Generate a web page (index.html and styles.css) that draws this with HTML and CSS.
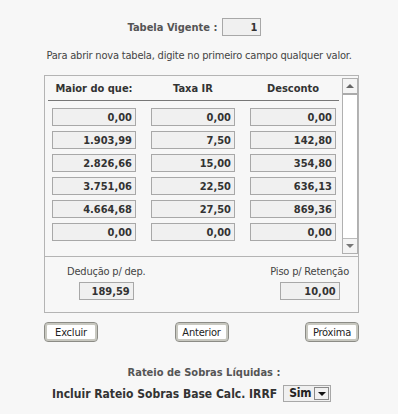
FILE: index.html
```html
<!DOCTYPE html>
<html lang="pt">
<head>
  <meta charset="utf-8">
  <title>Tabela IRRF</title>
  <link rel="stylesheet" href="styles.css">
</head>
<body>
  <div class="page">
    <div class="vigente">
      <span class="label-bold">Tabela Vigente :</span>
      <input class="field num small" type="text" value="1" readonly>
    </div>
    <p class="hint">Para abrir nova tabela, digite no primeiro campo qualquer valor.</p>

    <div class="box">
      <div class="scroll">
        <div class="table">
          <div class="row head">
            <span>Maior do que:</span>
            <span>Taxa IR</span>
            <span>Desconto</span>
          </div>
          <div class="row"><input class="field num" value="0,00" readonly><input class="field num" value="0,00" readonly><input class="field num" value="0,00" readonly></div>
          <div class="row"><input class="field num" value="1.903,99" readonly><input class="field num" value="7,50" readonly><input class="field num" value="142,80" readonly></div>
          <div class="row"><input class="field num" value="2.826,66" readonly><input class="field num" value="15,00" readonly><input class="field num" value="354,80" readonly></div>
          <div class="row"><input class="field num" value="3.751,06" readonly><input class="field num" value="22,50" readonly><input class="field num" value="636,13" readonly></div>
          <div class="row"><input class="field num" value="4.664,68" readonly><input class="field num" value="27,50" readonly><input class="field num" value="869,36" readonly></div>
          <div class="row"><input class="field num" value="0,00" readonly><input class="field num" value="0,00" readonly><input class="field num" value="0,00" readonly></div>
        </div>
        <div class="scrollbar">
          <div class="sb-btn up"><span class="arrow-up"></span></div>
          <div class="sb-track"></div>
          <div class="sb-btn down"><span class="arrow-down"></span></div>
        </div>
      </div>
      <div class="foot">
        <div class="foot-field left">
          <span>Dedução p/ dep.</span>
          <input class="field num ded" value="189,59" readonly>
        </div>
        <div class="foot-field right">
          <span>Piso p/ Retenção</span>
          <input class="field num piso" value="10,00" readonly>
        </div>
      </div>
    </div>

    <div class="buttons">
      <button class="btn">Excluir</button>
      <button class="btn">Anterior</button>
      <button class="btn">Próxima</button>
    </div>

    <div class="rateio">
      <p class="label-bold">Rateio de Sobras Líquidas :</p>
      <div class="rateio-row">
        <span class="label-bold dark">Incluir Rateio Sobras Base Calc. IRRF</span>
        <div class="select">
          <span class="select-value">Sim</span>
          <span class="select-btn"><span class="arrow-down dark"></span></span>
        </div>
      </div>
    </div>
  </div>
</body>
</html>
```

FILE: styles.css
```css
body {
  margin: 0;
  background-color: #f7f7f7;
  font-family: "DejaVu Sans Condensed", "DejaVu Sans", sans-serif;
  font-stretch: condensed;
  font-size: 11px;
  letter-spacing: -0.2px;
  color: #444;
}

.page {
  width: 398px;
}

.label-bold {
  font-weight: bold;
  letter-spacing: 0;
  color: #555;
}

.label-bold.dark {
  color: #333;
}

/* inputs */
.field {
  box-sizing: border-box;
  height: 18px;
  margin: 0;
  padding: 0 3px;
  border: 1px solid #a8a8a8;
  background-color: #f0f0f0;
  font-family: inherit;
  font-stretch: condensed;
  font-size: 11px;
  font-weight: bold;
  color: #333;
  outline: none;
}

.num {
  text-align: right;
}

.vigente {
  display: flex;
  justify-content: center;
  align-items: center;
  gap: 5px;
  padding-top: 18px;
  padding-right: 9px;
}

.field.small {
  width: 39px;
}

.hint {
  margin: 13px 0 0;
  text-align: center;
  line-height: 14px;
}

/* table box */
.box {
  margin: 12px 0 0 44px;
  width: 315px;
  box-sizing: border-box;
  border: 1px solid #b4b4b4;
}

.scroll {
  display: flex;
  height: 180px;
  border-bottom: 1px solid #b4b4b4;
}

.table {
  width: 291px;
  margin-left: 3px;
}

.row {
  display: grid;
  grid-template-columns: 84px 84px 86px;
  column-gap: 15px;
  padding-left: 4px;
  margin-bottom: 5px;
}

.row.head {
  height: 24px;
  align-items: center;
  margin-bottom: 7px;
  border-bottom: 1px solid #777;
  font-weight: bold;
  letter-spacing: 0;
  color: #333;
  text-align: center;
}

.scrollbar {
  display: flex;
  flex-direction: column;
  width: 16px;
  box-sizing: border-box;
  margin: 2px 0 2px auto;
  border: 1px solid #b0b0b0;
  background-color: #fff;
}

.sb-btn {
  height: 14px;
  display: flex;
  justify-content: center;
  align-items: center;
  background-color: #f4f4f4;
}

.sb-btn.up {
  border-bottom: 2px solid #aaa;
}

.sb-btn.down {
  border-top: 1px solid #bbb;
}

.sb-track {
  flex: 1;
}

.arrow-up {
  width: 0;
  height: 0;
  border-left: 4px solid transparent;
  border-right: 4px solid transparent;
  border-bottom: 4px solid #666;
}

.arrow-down {
  width: 0;
  height: 0;
  border-left: 4px solid transparent;
  border-right: 4px solid transparent;
  border-top: 4px solid #777;
}

.arrow-down.dark {
  border-top-color: #111;
}

/* lower part */
.foot {
  display: flex;
  justify-content: space-between;
  height: 55px;
  padding: 8px 9px 0 22px;
  box-sizing: border-box;
}

.foot-field {
  display: flex;
  flex-direction: column;
  align-items: center;
  gap: 4px;
  line-height: 13px;
}

.field.ded {
  width: 55px;
}

.field.piso {
  width: 60px;
}

/* buttons */
.buttons {
  display: flex;
  justify-content: space-between;
  width: 315px;
  margin: 9px 0 0 44px;
}

.btn {
  width: 54px;
  height: 20px;
  padding: 0;
  border: 1px solid #8c8c86;
  border-radius: 4px;
  background-color: #fff;
  box-shadow: inset 0 0 0 2px #c8c8c0;
  font-family: inherit;
  font-stretch: condensed;
  font-size: 11px;
  letter-spacing: -0.2px;
  color: #222;
}

/* rateio */
.rateio {
  margin-top: 24px;
  text-align: center;
}

.rateio p {
  margin: 0;
  padding-left: 10px;
  line-height: 14px;
}

.rateio-row {
  display: flex;
  align-items: center;
  gap: 6px;
  margin-top: 5px;
  padding-left: 52px;
  font-size: 12px;
}

.select {
  display: flex;
  height: 17px;
  box-sizing: border-box;
  border: 1px solid #a8a8a8;
  background-color: #f0f0f0;
}

.select-value {
  padding: 0 3px 0 5px;
  font-weight: bold;
  color: #222;
  line-height: 15px;
}

.select-btn {
  width: 15px;
  display: flex;
  justify-content: center;
  align-items: center;
  margin: 1px 1px 1px 0;
  border: 1px solid #888;
  box-sizing: border-box;
  background-color: #f0f0f0;
}
```
